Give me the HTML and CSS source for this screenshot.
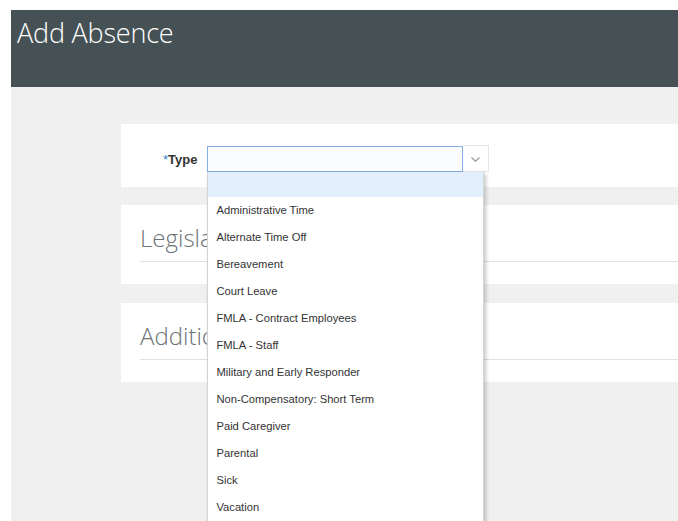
FILE: index.html
```html
<!DOCTYPE html>
<html lang="en">
<head>
<meta charset="utf-8">
<title>Add Absence</title>
<link rel="stylesheet" href="styles.css">
</head>
<body>
<div class="page">
  <header class="titlebar">
    <h1 class="title">Add Absence</h1>
  </header>
  <main class="content">
    <section class="card card-type">
      <label class="field-label"><span class="req">*</span>Type</label>
      <div class="combo">
        <div class="combo-input"></div>
        <div class="combo-btn">
          <svg width="9" height="5" viewBox="0 0 9 5" aria-hidden="true"><path d="M0.5 0.5 L4.5 4.3 L8.5 0.5" fill="none" stroke="#9a9a9a" stroke-width="1.2"/></svg>
        </div>
        <ul class="combo-list">
          <li class="combo-item is-active"></li>
          <li class="combo-item">Administrative Time</li>
          <li class="combo-item">Alternate Time Off</li>
          <li class="combo-item">Bereavement</li>
          <li class="combo-item">Court Leave</li>
          <li class="combo-item">FMLA - Contract Employees</li>
          <li class="combo-item">FMLA - Staff</li>
          <li class="combo-item">Military and Early Responder</li>
          <li class="combo-item">Non-Compensatory: Short Term</li>
          <li class="combo-item">Paid Caregiver</li>
          <li class="combo-item">Parental</li>
          <li class="combo-item">Sick</li>
          <li class="combo-item">Vacation</li>
        </ul>
      </div>
    </section>
    <section class="card card-section">
      <h2 class="section-title">Legislative Information</h2>
    </section>
    <section class="card card-section">
      <h2 class="section-title">Additional Information</h2>
    </section>
  </main>
</div>
</body>
</html>
```
FILE: styles.css
```css
html, body {
  margin: 0;
  padding: 0;
  background: #ffffff;
  overflow: hidden;
}

.page {
  padding: 10px 0 0 11px;
  font-family: "Open Sans", "Liberation Sans", sans-serif;
}

.titlebar {
  background: #465156;
  height: 77px;
  box-sizing: border-box;
  padding: 6px 0 0 6px;
}

.title {
  margin: 0;
  color: #ffffff;
  font-weight: 300;
  font-size: 27px;
  line-height: 34px;
  letter-spacing: -0.2px;
}

.content {
  background: #f0f0f0;
  min-height: 434px;
  box-sizing: border-box;
  padding: 37px 0 0 110px;
  display: flex;
  flex-direction: column;
  gap: 18px;
}

.card {
  background: #ffffff;
}

.card-type {
  height: 63px;
  box-sizing: border-box;
  padding: 22px 0 0 42px;
  display: flex;
  align-items: flex-start;
  gap: 10px;
}

.field-label {
  font-family: "Liberation Sans", Arial, sans-serif;
  font-weight: 700;
  font-size: 13px;
  color: #333333;
  line-height: 27px;
}

.req {
  color: #3d7fc8;
  font-weight: 400;
}

.combo {
  position: relative;
  display: flex;
}

.combo-input {
  width: 256px;
  height: 26px;
  box-sizing: border-box;
  border: 1px solid #86aee6;
  background: #fbfcfe;
}

.combo-btn {
  width: 26px;
  height: 27px;
  margin-top: -1px;
  box-sizing: border-box;
  border: 1px solid #e6e6e6;
  border-left: none;
  background: #ffffff;
  display: flex;
  align-items: center;
  justify-content: center;
  padding-top: 2px;
}

/* open options list, drawn over the sections below */
.combo-list {
  position: absolute;
  top: 26px;
  left: 0;
  width: 277px;
  margin: 0;
  padding: 0;
  list-style: none;
  background: #ffffff;
  box-sizing: border-box;
  border: 1px solid #d4d4d4;
  border-top: none;
  box-shadow: 2px 2px 4px rgba(0, 0, 0, 0.22);
}

.combo-item {
  height: 27px;
  line-height: 27px;
  padding-left: 8px;
  font-family: "Liberation Sans", Arial, sans-serif;
  font-size: 11.2px;
  color: #333333;
  white-space: nowrap;
}

.combo-item.is-active {
  height: 25px;
  background: #e3effc;
}

.card-section {
  height: 79px;
  box-sizing: border-box;
  padding: 15px 0 0 19px;
}

.card-section + .card-section {
  margin-top: 1px;
}

.section-title {
  margin: 0;
  font-weight: 300;
  font-size: 24px;
  line-height: 36px;
  color: #6b7276;
  padding-bottom: 5px;
  border-bottom: 1px solid #dde2e4;
  white-space: nowrap;
}
```
